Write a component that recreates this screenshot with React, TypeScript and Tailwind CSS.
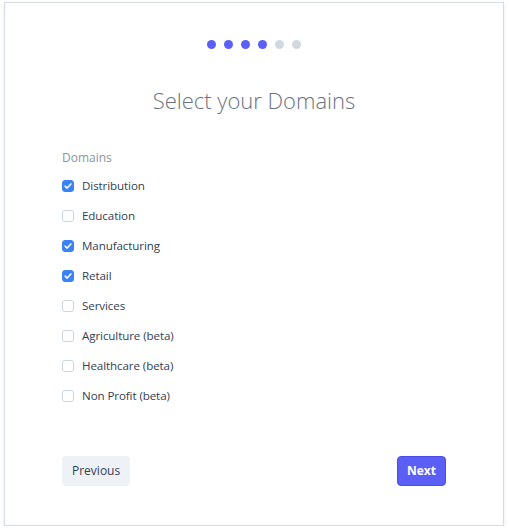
import { useState } from "react";

const DOMAINS = [
  { name: "Distribution", checked: true },
  { name: "Education", checked: false },
  { name: "Manufacturing", checked: true },
  { name: "Retail", checked: true },
  { name: "Services", checked: false },
  { name: "Agriculture (beta)", checked: false },
  { name: "Healthcare (beta)", checked: false },
  { name: "Non Profit (beta)", checked: false },
];

function Check({ checked, onToggle }: { checked: boolean; onToggle: () => void }) {
  return (
    <button
      type="button"
      onClick={onToggle}
      className={`flex h-[12px] w-[12px] items-center justify-center rounded-[3px] border ${
        checked ? "border-[#3b82f6] bg-[#3b82f6]" : "border-[#cdd6de] bg-white"
      }`}
    >
      {checked ? (
        <svg viewBox="0 0 12 12" className="h-[10px] w-[10px]" fill="none">
          <path d="M2.5 6.2 L5 8.5 L9.5 3.5" stroke="white" strokeWidth="1.8" strokeLinecap="round" strokeLinejoin="round" />
        </svg>
      ) : null}
    </button>
  );
}

export default function App() {
  const [items, setItems] = useState(DOMAINS);
  const step = 4;

  return (
    <div className="pl-[4px] pt-[2px]" style={{ fontFamily: '"Open Sans", "Noto Sans", sans-serif' }}>
      <div className="flex h-[524px] w-[500px] flex-col border border-[#d5dde4] bg-white px-[57px] shadow-[0_2px_4px_rgba(0,0,0,0.08)]">
        <div className="mt-[37px] flex justify-center gap-[8px]">
          {[1, 2, 3, 4, 5, 6].map((i) => (
            <span
              key={i}
              className={`h-[9px] w-[9px] rounded-full ${i <= step ? "bg-[#5c5ff6]" : "bg-[#d1d9e0]"}`}
            />
          ))}
        </div>

        <h1 className="mt-[36px] text-center text-[22px] font-light leading-[30px] text-[#6b7280]">
          Select your Domains
        </h1>

        <p className="mt-[35px] text-[12px] leading-[16px] text-[#8796a5]">Domains</p>

        <div className="mt-[5px] flex flex-col">
          {items.map((d, idx) => (
            <label key={d.name} className="flex h-[30px] items-center gap-[8px] text-[11.6px] tracking-[-0.1px] text-[#334155]">
              <Check
                checked={d.checked}
                onToggle={() =>
                  setItems((prev) => prev.map((p, j) => (j === idx ? { ...p, checked: !p.checked } : p)))
                }
              />
              <span>{d.name}</span>
            </label>
          ))}
        </div>

        <div className="mt-auto mb-[39px] flex items-center justify-between">
          <button
            type="button"
            className="h-[30px] rounded-[4px] bg-[#eef2f6] px-[10px] text-[12px] text-[#334155]"
          >
            Previous
          </button>
          <button
            type="button"
            className="h-[30px] rounded-[4px] border border-[#4b4fe8] bg-[#5c5ff6] px-[9px] text-[12px] font-bold text-white"
          >
            Next
          </button>
        </div>
      </div>
    </div>
  );
}
